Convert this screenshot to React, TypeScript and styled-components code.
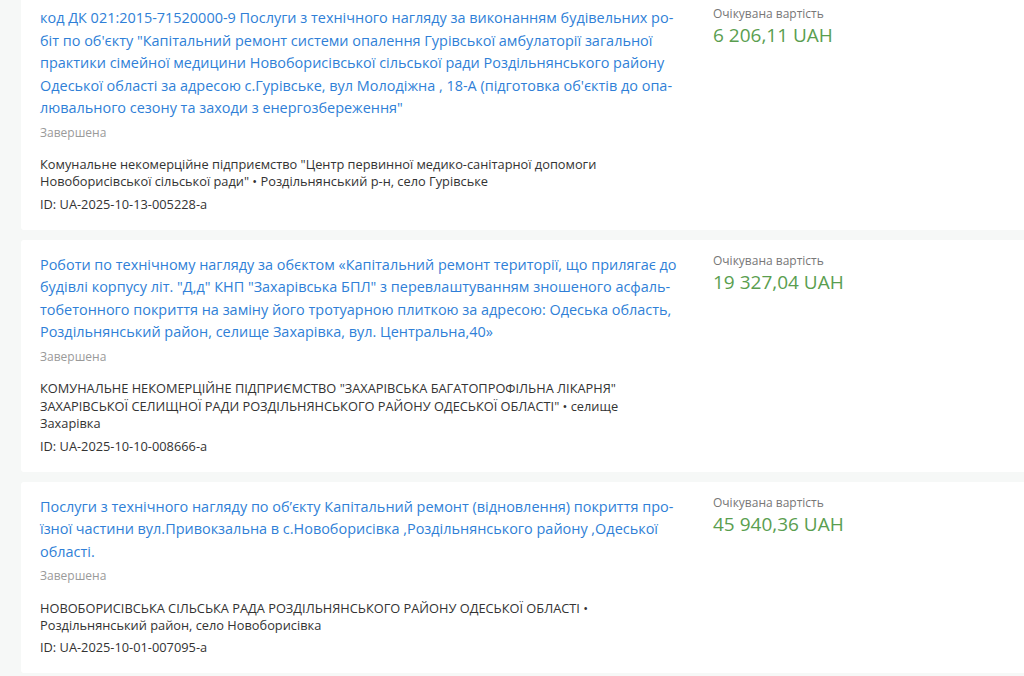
import React from "react";
import styled, { createGlobalStyle } from "styled-components";

const GlobalStyle = createGlobalStyle`
  html, body {
    margin: 0;
    padding: 0;
    background: #f6f8f7;
    overflow: hidden;
  }
  body {
    font-family: "Open Sans", "Noto Sans", sans-serif;
  }
`;

const List = styled.div`
  display: flex;
  flex-direction: column;
  gap: 10px;
  margin-top: -7px;
  padding-left: 21px;
`;

const Card = styled.article`
  display: grid;
  grid-template-columns: 640px 1fr;
  column-gap: 33px;
  padding: 14px 0 17px 19px;
  background: #fff;
  border-radius: 3px 0 0 3px;
`;

const Main = styled.div`
  display: flex;
  flex-direction: column;
`;

const Title = styled.a`
  font-size: 14.45px;
  line-height: 22.5px;
  color: #2f7fd7;
  text-decoration: none;
  cursor: pointer;
`;

const Status = styled.div`
  margin-top: 4px;
  font-size: 12px;
  line-height: 18px;
  color: #9a9a9a;
`;

const Buyer = styled.div`
  margin-top: 14.5px;
  font-size: 12.8px;
  line-height: 17.4px;
  color: #333;
`;

const TenderId = styled.div`
  margin-top: 4px;
  font-size: 12.8px;
  line-height: 18px;
  color: #333;
`;

const Side = styled.div`
  display: flex;
  flex-direction: column;
`;

const PriceLabel = styled.div`
  font-size: 12px;
  line-height: 14px;
  color: #777;
`;

const Price = styled.div`
  margin-top: 1px;
  font-size: 19px;
  line-height: 26px;
  color: #5a9e4f;
`;

type Tender = {
  title: string;
  buyer: string;
  place: string;
  id: string;
  amount: string;
};

const tenders: Tender[] = [
  {
    title:
      'код ДК 021:2015-71520000-9 Послуги з технічного нагляду за виконанням будівельних ро\u00ADбіт по об\'єкту "Капітальний ремонт системи опалення Гурівської амбулаторії загальної практики сімейної медицини Новоборисівської сільської ради Роздільнянського району Одеської області за адресою с.Гурівське, вул Молодіжна , 18-А (підготовка об\'єктів до опа\u00ADлювального сезону та заходи з енергозбереження"',
    buyer:
      'Комунальне некомерційне підприємство "Центр первинної медико-санітарної допомоги Новоборисівської сільської ради"',
    place: "Роздільнянський р-н, село Гурівське",
    id: "UA-2025-10-13-005228-a",
    amount: "6 206,11 UAH",
  },
  {
    title:
      'Роботи по технічному нагляду за обєктом «Капітальний ремонт території, що прилягає до будівлі корпусу літ. "Д,д" КНП "Захарівська БПЛ" з перевлаштуванням зношеного асфаль\u00ADтобетонного покриття на заміну його тротуарною плиткою за адресою: Одеська область, Роздільнянський район, селище Захарівка, вул. Центральна,40»',
    buyer:
      'КОМУНАЛЬНЕ НЕКОМЕРЦІЙНЕ ПІДПРИЄМСТВО "ЗАХАРІВСЬКА БАГАТОПРОФІЛЬНА ЛІКАРНЯ" ЗАХАРІВСЬКОЇ СЕЛИЩНОЇ РАДИ РОЗДІЛЬНЯНСЬКОГО РАЙОНУ ОДЕСЬКОЇ ОБЛАСТІ"',
    place: "селище Захарівка",
    id: "UA-2025-10-10-008666-a",
    amount: "19 327,04 UAH",
  },
  {
    title:
      "Послуги з технічного нагляду по об’єкту Капітальний ремонт (відновлення) покриття про\u00ADїзної частини вул.Привокзальна в с.Новоборисівка ,Роздільнянського району ,Одеської області.",
    buyer: "НОВОБОРИСІВСЬКА СІЛЬСЬКА РАДА РОЗДІЛЬНЯНСЬКОГО РАЙОНУ ОДЕСЬКОЇ ОБЛАСТІ",
    place: "Роздільнянський район, село Новоборисівка",
    id: "UA-2025-10-01-007095-a",
    amount: "45 940,36 UAH",
  },
];

const TenderCard = ({ tender }: { tender: Tender }) => (
  <Card>
    <Main>
      <Title>{tender.title}</Title>
      <Status>Завершена</Status>
      <Buyer>
        {tender.buyer} • {tender.place}
      </Buyer>
      <TenderId>ID: {tender.id}</TenderId>
    </Main>
    <Side>
      <PriceLabel>Очікувана вартість</PriceLabel>
      <Price>{tender.amount}</Price>
    </Side>
  </Card>
);

const App = () => {
  return (
    <>
      <GlobalStyle />
      <List>
        {tenders.map((t) => (
          <TenderCard key={t.id} tender={t} />
        ))}
      </List>
    </>
  );
};

export default App;
